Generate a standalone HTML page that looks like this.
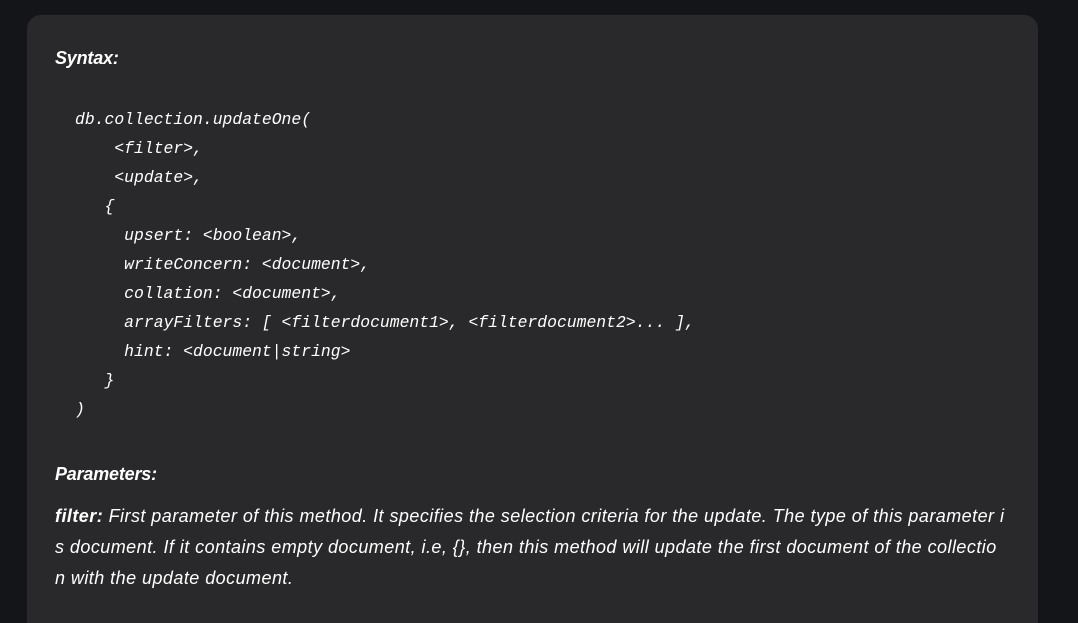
<!DOCTYPE html>
<html><head><style>
html,body{margin:0;padding:0;background:#141518;width:1078px;height:623px;overflow:hidden}
.card{position:absolute;left:27px;top:15px;width:1011px;height:608px;background:#29292c;border-radius:14px 14px 0 0}
.t{position:absolute;left:55px;white-space:nowrap;color:#fff;font-family:"Liberation Sans",sans-serif;font-style:italic;font-size:18px;letter-spacing:0.45px;line-height:20px}
.b{font-weight:bold}
.h{font-size:18px;letter-spacing:-0.2px}
.c{position:absolute;left:75px;white-space:pre;color:#fff;font-family:"Liberation Mono",monospace;font-style:italic;font-size:16.4px;line-height:20px}
</style></head><body>
<div class="card"></div>
<div class="t b h" style="top:48px">Syntax:</div>
<div class="c" style="top:110px">db.collection.updateOne(</div>
<div class="c" style="top:139px">    &lt;filter&gt;,</div>
<div class="c" style="top:168px">    &lt;update&gt;,</div>
<div class="c" style="top:197px">   {</div>
<div class="c" style="top:226px">     upsert: &lt;boolean&gt;,</div>
<div class="c" style="top:255px">     writeConcern: &lt;document&gt;,</div>
<div class="c" style="top:284px">     collation: &lt;document&gt;,</div>
<div class="c" style="top:313px">     arrayFilters: [ &lt;filterdocument1&gt;, &lt;filterdocument2&gt;... ],</div>
<div class="c" style="top:342px">     hint: &lt;document|string&gt;</div>
<div class="c" style="top:371px">   }</div>
<div class="c" style="top:400px">)</div>
<div class="t b h" style="top:464px">Parameters:</div>
<div class="t" style="top:506px"><b>filter:</b> First parameter of this method. It specifies the selection criteria for the update. The type of this parameter i</div>
<div class="t" style="top:537px">s document. If it contains empty document, i.e, {}, then this method will update the first document of the collectio</div>
<div class="t" style="top:568px">n with the update document.</div>
</body></html>
